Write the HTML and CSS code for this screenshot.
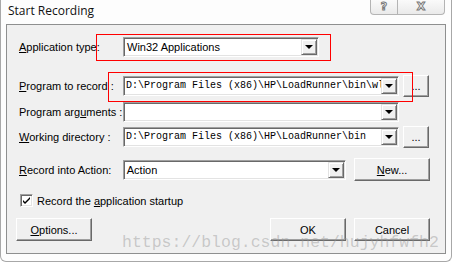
FILE: index.html
```html
<!DOCTYPE html>
<html lang="en">
<head>
    <meta charset="UTF-8">
    <title>Start Recording</title>
    <link rel="stylesheet" href="styles.css">
</head>
<body>
    <div class="window">
        <div class="titlebar">
            <span class="title">Start Recording</span>
            <div class="caption-btns">
                <span class="cap help">?</span>
                <span class="cap close">X</span>
            </div>
        </div>

        <div class="panel">
            <div class="row row-type">
                <label class="lbl"><u>A</u>pplication type:</label>
                <div class="combo combo-short">
                    <span class="val">Win32 Applications</span>
                    <span class="drop"></span>
                </div>
            </div>

            <div class="row row-prog">
                <label class="lbl"><u>P</u>rogram to record :</label>
                <div class="combo combo-long">
                    <span class="val mono">D:\Program Files (x86)\HP\LoadRunner\bin\wlrun.exe</span>
                    <span class="drop"></span>
                </div>
                <button class="btn btn-browse">...</button>
            </div>

            <div class="row row-args">
                <label class="lbl">Program arg<u>u</u>ments :</label>
                <div class="combo combo-long">
                    <span class="val"></span>
                    <span class="drop"></span>
                </div>
            </div>

            <div class="row row-dir">
                <label class="lbl"><u>W</u>orking directory :</label>
                <div class="combo combo-long">
                    <span class="val mono">D:\Program Files (x86)\HP\LoadRunner\bin</span>
                    <span class="drop"></span>
                </div>
                <button class="btn btn-browse">...</button>
            </div>

            <div class="row row-action">
                <label class="lbl"><u>R</u>ecord into Action:</label>
                <div class="combo combo-mid">
                    <span class="val">Action</span>
                    <span class="drop"></span>
                </div>
                <button class="btn btn-new"><u>N</u>ew...</button>
            </div>

            <div class="row row-check">
                <span class="checkbox">
                    <svg width="9" height="9" viewBox="0 0 9 9"><path d="M1 4 L3 6 L8 1 L8 3 L3 8 L1 6 Z" fill="#000"/></svg>
                </span>
                <span class="check-text">Record the <u>a</u>pplication startup</span>
            </div>

            <div class="row row-buttons">
                <button class="btn"><u>O</u>ptions...</button>
                <div class="btn-group">
                    <button class="btn">OK</button>
                    <button class="btn">Cancel</button>
                </div>
            </div>
        </div>

        <!-- marcações vermelhas por cima do print -->
        <div class="mark mark-type"></div>
        <div class="mark mark-prog"></div>

        <div class="watermark">https://blog.csdn.net/hujyhfwfh2</div>
    </div>
</body>
</html>
```

FILE: styles.css
```css
* {
    box-sizing: border-box;
}

body {
    margin: 0;
    background: #fff;
    font-family: 'Liberation Sans', Arial, sans-serif;
    font-size: 11px;
    color: #000;
}

.window {
    position: relative;
    width: 452px;
    height: 262px;
    background: #fdfdfd;
    border: 1px solid #a8a8a8;
    border-top: none;
    border-radius: 0 0 6px 6px;
    overflow: hidden;
}

.titlebar {
    display: flex;
    justify-content: space-between;
    align-items: flex-start;
    height: 24px;
    padding: 0 6px 0 7px;
}

.title {
    font-family: 'Open Sans', 'Noto Sans', sans-serif;
    font-size: 12px;
    line-height: 22px;
    color: #111;
}

.caption-btns {
    display: flex;
}

.cap {
    height: 15px;
    border: 1px solid #b4b4b4;
    border-top: none;
    background: linear-gradient(#fafafa, #eaeaea);
    text-align: center;
    font-family: 'DejaVu Sans', sans-serif;
    font-weight: bold;
    font-size: 11px;
    line-height: 13px;
    color: #fff;
    -webkit-text-stroke: 1px #7a7a7a;
}

.help {
    width: 28px;
    border-radius: 0 0 0 4px;
}

.close {
    width: 47px;
    border-left: none;
    border-radius: 0 0 4px 0;
}

.panel {
    width: 440px;
    margin-left: 5px;
    background: #f0f0f0;
    border: 1px solid #8e8f8f;
    padding: 0 15px 12px 9px;
}

.row {
    display: flex;
    align-items: center;
}

.lbl {
    width: 104px;
    margin-left: 3px;
    white-space: nowrap;
}

.row-type {
    height: 20px;
    margin-top: 12px;
}

.row-prog {
    height: 22px;
    margin-top: 18px;
}

.row-args {
    height: 20px;
    margin-top: 5px;
}

.row-dir {
    height: 22px;
    margin-top: 4px;
}

.row-action {
    height: 23px;
    margin-top: 10px;
}

.row-check {
    height: 13px;
    margin-top: 13px;
}

.row-buttons {
    height: 23px;
    margin-top: 11px;
    justify-content: space-between;
}

/* caixas tipo combo do windows classico */
.combo {
    display: flex;
    height: 20px;
    background: #fff;
    border: 1px solid;
    border-color: #a0a0a0 #fff #fff #a0a0a0;
    box-shadow: inset 1px 1px 0 #696969, inset -1px -1px 0 #e3e3e3;
    padding: 1px;
}

.combo-short {
    width: 196px;
}

.combo-long {
    width: 276px;
}

.combo-mid {
    width: 224px;
}

.val {
    flex: 1;
    overflow: hidden;
    white-space: nowrap;
    padding-left: 2px;
    line-height: 16px;
}

.mono {
    font-family: 'Liberation Mono', 'Courier New', monospace;
    font-size: 10px;
    padding-left: 1px;
}

.drop {
    position: relative;
    width: 16px;
    height: 16px;
    background: #f0f0f0;
    border: 1px solid;
    border-color: #e3e3e3 #696969 #696969 #e3e3e3;
    box-shadow: inset 1px 1px 0 #fff, inset -1px -1px 0 #a0a0a0;
}

.drop::after {
    content: '';
    position: absolute;
    left: 3px;
    top: 5px;
    border-left: 4px solid transparent;
    border-right: 4px solid transparent;
    border-top: 4px solid #000;
}

.btn {
    width: 76px;
    height: 23px;
    padding: 0;
    background: #f0f0f0;
    border: 1px solid;
    border-color: #fff #696969 #696969 #fff;
    box-shadow: inset -1px -1px 0 #a0a0a0;
    font-family: 'Liberation Sans', Arial, sans-serif;
    font-size: 11px;
    color: #000;
}

.btn-browse {
    width: 26px;
    height: 22px;
    margin-left: 4px;
    line-height: 14px;
}

.btn-new {
    margin-left: 8px;
}

.btn-group {
    display: flex;
    gap: 8px;
}

.checkbox {
    display: flex;
    align-items: center;
    justify-content: center;
    width: 13px;
    height: 13px;
    margin-left: 4px;
    background: #fff;
    border: 1px solid;
    border-color: #a0a0a0 #fff #fff #a0a0a0;
    box-shadow: inset 1px 1px 0 #696969, inset -1px -1px 0 #e3e3e3;
}

.check-text {
    margin-left: 4px;
}

.mark {
    position: absolute;
    border: 1px solid #f00;
}

.mark-type {
    left: 95px;
    top: 34px;
    width: 235px;
    height: 27px;
}

.mark-prog {
    left: 107px;
    top: 72px;
    width: 305px;
    height: 30px;
}

.watermark {
    position: absolute;
    left: 121px;
    top: 233px;
    font-family: 'Liberation Mono', 'Courier New', monospace;
    font-size: 16.5px;
    color: rgba(150, 150, 150, 0.45);
    white-space: nowrap;
}
```
